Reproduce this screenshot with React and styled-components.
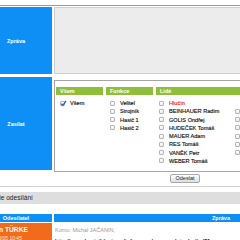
import React from "react";
import styled, { createGlobalStyle } from "styled-components";

const GlobalStyle = createGlobalStyle`
  html, body {
    margin: 0;
    padding: 0;
    background: #ffffff;
    overflow: hidden;
  }
  body {
    font-family: "Liberation Sans", Arial, sans-serif;
    color: #222222;
  }
`;

const BLUE = "#0d8ff5";

const Page = styled.div`
  margin-left: -20px;
  width: 420px;
  padding-top: 5px;
`;

const Rule = styled.div`
  height: 1px;
  background: #9a9a9a;
  margin-bottom: 1px;
`;

const FormRow = styled.div`
  display: grid;
  grid-template-columns: 72px 262px;
  column-gap: 2px;
  align-items: start;
  margin-bottom: ${(p) => p.$gap || 0}px;
`;

const Label = styled.div`
  height: ${(p) => p.$h}px;
  background: ${BLUE};
  color: #ffffff;
  font-size: 5.5px;
  font-weight: bold;
  display: flex;
  align-items: center;
  justify-content: center;
`;

const TextArea = styled.div`
  box-sizing: border-box;
  height: 67px;
  width: 262px;
  background: #ececec;
  border: 1px solid #cfcfcf;
`;

const Box = styled.div`
  box-sizing: border-box;
  margin-top: 3px;
  height: 92px;
  background: #ffffff;
  border: 1px solid #a5a5a5;
  padding: 6px 1px 0 1px;
  display: grid;
  grid-template-columns: 47px 47px 1fr;
  column-gap: 3px;
`;

const Column = styled.div`
  display: flex;
  flex-direction: column;
`;

const Head = styled.div`
  height: 8px;
  line-height: 8px;
  background: #8fbf3a;
  color: #ffffff;
  font-size: 5.5px;
  font-weight: bold;
  padding-left: 4px;
`;

const List = styled.div`
  padding: 4px 0 0 ${(p) => p.$pad || 4}px;
  display: ${(p) => (p.$split ? "grid" : "block")};
  grid-template-columns: 76px 1fr;
`;

const Item = styled.div`
  height: 8.25px;
  display: flex;
  align-items: center;
  gap: 5px;
  font-size: 5.6px;
  color: ${(p) => (p.$red ? "#e8202a" : "#111111")};
  -webkit-text-stroke: 0.15px ${(p) => (p.$red ? "#e8202a" : "#111111")};
  white-space: nowrap;
`;

const Check = styled.span`
  box-sizing: border-box;
  flex: none;
  width: 5px;
  height: 5px;
  border: 1px solid #b4b4b4;
  border-radius: 1px;
  background: linear-gradient(#ffffff, #ececec);
  position: relative;
`;

const Tick = styled.svg`
  position: absolute;
  left: -1px;
  top: -2px;
`;

const ButtonRow = styled.div`
  display: flex;
  justify-content: center;
  width: 262px;
  margin-left: 74px;
  padding-top: 2px;
`;

const Button = styled.button`
  box-sizing: border-box;
  height: 9px;
  padding: 0 5px;
  font-family: inherit;
  font-size: 5.5px;
  line-height: 7px;
  color: #222222;
  background: linear-gradient(#ffffff, #dedede);
  border: 1px solid #a8a8a8;
  border-radius: 2px;
`;

const Divider = styled.div`
  height: 1px;
  background: #d2d2d2;
  margin-top: 3px;
`;

const SectionBar = styled.div`
  margin-top: 5px;
  height: 12px;
  line-height: 12px;
  background: #dedede;
  font-size: 6.6px;
  color: #222222;
  padding-left: 2px;
`;

const Table = styled.div`
  margin-top: 10px;
  display: grid;
  grid-template-columns: 72px 1fr;
  column-gap: 2px;
  row-gap: 1px;
`;

const HeadCell = styled.div`
  height: 8px;
  line-height: 8px;
  background: ${BLUE};
  color: #ffffff;
  font-size: 5.5px;
  font-weight: bold;
  text-align: ${(p) => p.$align || "center"};
  padding-right: ${(p) => (p.$align === "right" ? "170px" : "0")};
`;

const Sender = styled.div`
  background: #f26b1d;
  color: #ffffff;
  padding: 3px 0 0 3px;
  height: 30px;
`;

const SenderName = styled.div`
  font-size: 6.7px;
  font-weight: bold;
  line-height: 8px;
`;

const SenderDate = styled.div`
  font-size: 5px;
  line-height: 9px;
  color: #ffe6d6;
`;

const Message = styled.div`
  padding: 3px 0 0 1px;
`;

const Recipient = styled.div`
  font-size: 5.5px;
  line-height: 8px;
  color: #9a9a9a;
`;

const Link = styled.div`
  margin-top: 3px;
  font-size: 5.5px;
  font-weight: bold;
  line-height: 8px;
  color: #111111;
  white-space: nowrap;
`;

const Box5 = ({ checked }) => (
  <Check>
    {checked && (
      <Tick width="7" height="7" viewBox="0 0 7 7">
        <path d="M1.2 3.8 L2.8 5.4 L6 1" fill="none" stroke="#2a62c9" strokeWidth="1.3" />
      </Tick>
    )}
  </Check>
);

const functions = ["Velitel", "Strojník", "Hasič 1", "Hasič 2"];
const people = [
  "BEINHAUER Radim",
  "GOLIS Ondřej",
  "HUDEČEK Tomáš",
  "MAUER Adam",
  "RES Tomáš",
  "VANĚK Petr",
  "WEBER Tomáš",
];

export default function App() {
  return (
    <>
      <GlobalStyle />
      <Page>
        <Rule />
        <FormRow $gap={3}>
          <Label $h={67}>Zpráva</Label>
          <TextArea />
        </FormRow>
        <FormRow>
          <Label $h={93}>Zasílat</Label>
          <Box>
            <Column>
              <Head>Všem</Head>
              <List>
                <Item>
                  <Box5 checked />
                  Všem
                </Item>
              </List>
            </Column>
            <Column>
              <Head>Funkce</Head>
              <List>
                {functions.map((f) => (
                  <Item key={f}>
                    <Box5 />
                    {f}
                  </Item>
                ))}
              </List>
            </Column>
            <Column>
              <Head>Lidé</Head>
              <List $pad={3} $split>
                <div>
                  <Item $red>
                    <Box5 />
                    Hlučín
                  </Item>
                  {people.map((p) => (
                    <Item key={p}>
                      <Box5 />
                      {p}
                    </Item>
                  ))}
                </div>
                <div>
                  <Item />
                  {people.slice(0, 6).map((p) => (
                    <Item key={p}>
                      <Box5 />
                    </Item>
                  ))}
                </div>
              </List>
            </Column>
          </Box>
        </FormRow>
        <ButtonRow>
          <Button>Odeslat</Button>
        </ButtonRow>
        <Divider />
        <SectionBar>Historie odesílání</SectionBar>
        <Table>
          <HeadCell>Odesílatel</HeadCell>
          <HeadCell $align="right">Zpráva</HeadCell>
          <Sender>
            <SenderName>Martin TÜRKE</SenderName>
            <SenderDate>2013/03/05 10:45</SenderDate>
          </Sender>
          <Message>
            <Recipient>Komu: Michal JAČANIN,</Recipient>
            <Link>http://www.hasicihlucin.cz/informace/novy-web-technika/?1</Link>
          </Message>
        </Table>
      </Page>
    </>
  );
}
